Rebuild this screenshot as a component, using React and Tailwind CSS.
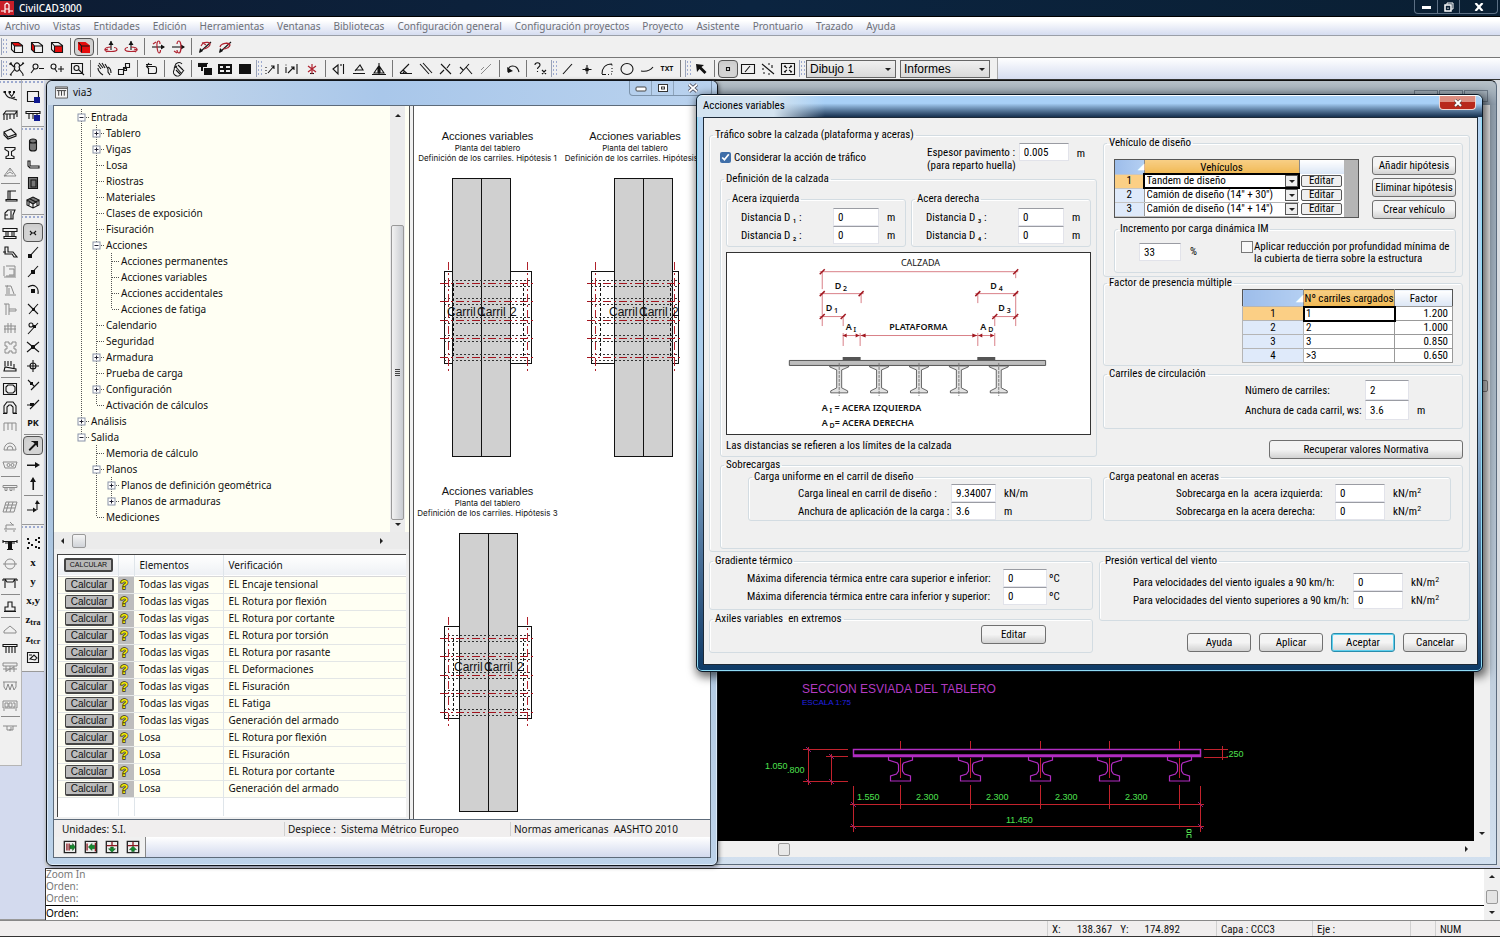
import { useState } from 'react';

const menus = [
  "Archivo", "Vistas", "Entidades", "Edición", "Herramientas", "Ventanas", "Bibliotecas",
  "Configuración general", "Configuración proyectos", "Proyecto", "Asistente", "Prontuario", "Trazado", "Ayuda",
]

// Icon paths on a 16x16 grid. s: stroke, r: red stroke, g: grey stroke, f: fill, rf: red fill, gf: grey fill, b: blue fill
const cube = "M2.500 3.500h7l4 3v7h-8l-3-3zM2.500 3.500l3 3.500h8M5.500 7v6.500"
const orbit = "M8 8c-4 0-6 1-6 2.500s3 2 6 2 6-.5 6-2-2-2-3-2M5 10l-3 1 2 2"
const icons = {
  cubeTop: { rf: "M2.500 3.500h7l4 3.500h-8z", s: cube },
  cubeLeft: { rf: "M2.500 3.500l3 3.500v6.500l-3-3z", s: cube },
  cubeFront: { rf: "M5.500 7h8v6.500h-8z", s: cube },
  cubeAll: { rf: "M2 3h7.500l4.500 3.500v7.500h-8.500l-3.500-3.500z", s: "M2.500 3.500l3 3.500v6.500M5.500 7h8" },
  orbitL: { r: orbit, s: "M8 2v9", f: "M5.500 6L8 2l2.500 4z" },
  orbitR: { r: "M8 8c4 0 6 1 6 2.500s-3 2-6 2-6-.5-6-2 2-2 3-2M11 10l3 1-2 2", s: "M8 2v9", f: "M5.500 6L8 2l2.500 4z" },
  spinL: { r: "M7 8c-.5-4 .5-6 1.500-6S10 4 10 5M7 8c.5 4 1 6 2 6s1.500-2 1.500-3M3 5l3-2", s: "M2 8h12", f: "M11 5.500l4 2.500-4 2.500z" },
  spinR: { r: "M7 5c0-2 1-3 2-3s2 3 2 6-1 6-2 6-2-1-2-3M4 12l3 2", s: "M2 8h12", f: "M11 5.500l4 2.500-4 2.500z" },
  slashL: { r: "M5 4c4-1 8-1 8 1s-3 4-6 5M4 7l2-3 3 2", s: "M3 13L14 3", f: "M2 14l1-5 3 3z" },
  slashR: { r: "M3 8c1-4 9-5 10-2 0 2-4 4-7 4M9 4l4 2-2 3", s: "M3 13L14 3", f: "M2 14l1-5 3 3z" },
  zoomAll: { s: "M6 6a2.500 2.500 0 1 1 4 0 2.500 2.500 0 1 1-4 0M10 8l4 5M1 2l4 4M15 2l-4 3M1 14l5-6M1 2h2M1 2v2M15 2h-2M1 14h2M15 14h-2" },
  zoomOut: { s: "M4 5.500a2.500 2.500 0 1 1 5 0 2.500 2.500 0 1 1-5 0M5 8l-3 4M10 7.500h5" },
  zoomIn: { s: "M2 5.500a2.500 2.500 0 1 1 5 0 2.500 2.500 0 1 1-5 0M6 8l2 3M9 8h6M12 5v6" },
  zoomWin: { s: "M2.500 2.500h11v10h-11zM5 7a2.500 2.500 0 1 1 5 0 2.500 2.500 0 1 1-5 0M10 9l5 5" },
  hand: { s: "M2 4l3 4M3 2l4 5M6 2l3 5M9 3l3 5v3l2 3M2 7c0 2 2 5 5 7M12 6c2 1 3 4 3 6" },
  squares: { s: "M2.500 8.500h5v5h-5zM9.500 2.500h4v4h-4zM7 9l4-3M7.500 8.500v-2h3v3h-3" },
  undoBox: { s: "M3.500 5.500h8a2 2 0 0 1 2 2v3a2 2 0 0 1-2 2h-6v-5M3 3.500h6M6 2L3.500 5.500 6 8" },
  clip: { s: "M12 3a4 4 0 0 0-7 2l-1 4a4 4 0 0 0 7 4l3-4M6 6l5 6M8 4l5 5M6 9l4 4M4 7l3-2" },
  layers: { f: "M1 3h9v3H6v4H4V6H1zM7 7h8v7H7z" , s: "M1 2.500h10" },
  grid4: { f: "M1 3h14v10H1z", w: "M3 5h3v2H3zM9 5h4v2H9zM3 9h4v2H3zM9 9h4v2H9z" },
  solid: { f: "M2 3h12v10H2z" },
  dimA: { s: "M2 6v1M2 9v1M2 12v1M4 12l6-7M7 5h3v3M14 3v10" },
  dimB: { s: "M2 6v6M4 12l6-6M7 6h3v3M13 3v10", g: "M2 3v2" },
  star: { r: "M8 3v10M4 5l8 6M12 5l-8 6", s: "M6 12.500h4" },
  mirror: { s: "M2 8l5-4v9zM12.500 3v10M10 3v2" },
  angle: { s: "M2 12.500h12M4 10l5-6 3 5H4" },
  balance: { s: "M8 2v11M3 12l4-6v6zM13 12L9 6v6zM1 13.500h14" },
  protract: { s: "M2 12.500h12M2 12L11 3M5 9l4 3.500M5 12l2-2" },
  parallel: { s: "M2 3l9 10M5 2l9 10" },
  cross: { s: "M3 3l10 10M12 3l-3 4M6 9l-4 4" },
  tee: { s: "M2 13l9-10M8 6l6 7M2 6l3 3" },
  thin: { g: "M3 13L13 3M6 6l-3 3" },
  undo: { s: "M3 11c0-8 9-8 11 0", f: "M2 6l1 6 5-2z" },
  help: { s: "M3 4c0-3 5-3 5 0 0 2-2.500 2-2.500 4M5.500 10v1M10 9l4 4M14 9l-4 4" },
  line: { s: "M4 13L13 3" },
  point: { s: "M8 4v9M3.500 8.500h9M6.500 7l3 3M9.500 7l-3 3" },
  quarter: { s: "M3 13c0-6 3-10 10-10M3 13.500h4M13 3.500v1M13 7v1M13 10v1M13 13h-1M9 13.500h1" },
  circle: { s: "M2 8a6 5.500 0 1 1 12 0 6 5.500 0 1 1-12 0" },
  curve: { s: "M2 10c6 1 9 0 12-4" },
  pointer: { f: "M3 3l8 1-2.500 2 5 5-2 2-5-5L4 11z" },
  dot: { s: "M6.500 6.500h3v3h-3z" },
  boxLine: { s: "M1.500 3.500h13v9h-13zM5 11l5-6" },
  dashLine: { s: "M2 3l12 10M3 7v2M3 12h2M8 13h2M8 3h2M12 4v3" },
  extents: { s: "M1.500 2.500h13v11h-13zM4 5l3 2M12 5l-3 2M4 11l3-2M12 11l-3-2M4 5h2M12 5h-2M4 11h2M12 11h-2" },
  // bridge rail
  truss: { s: "M1 4h3M6 4h3M11 4h2M3 5c2 4 4 5 6 5M7 5l3 4M12 5l-2 3M6 9c2 1 4 2 7 0M9 10l6 2", f: "M2 3h2v2H2zM7 3h2v2H7zM11 3h2v2h-2z" },
  portal: { s: "M1 8l3-4h11l-2 3H1M2 8v5M5 7v6M8 7v5M12 7v5M15 4v6" },
  slab: { s: "M2 6l7-3 5 5-8 3zM2 6v3l4 4 8-3V8" },
  ibeam: { s: "M3 2.500h10v2l-3.500 2v4l2.500 1v2H4v-2l2.500-1v-4L3 4.500z" },
  aframe: { g: "M8 4L2 12h12zM8 4v3M5 10l3-2 3 2M2 12l3-1" },
  abutA: { s: "M4 12.500h11M8 12V4h6M8 4H6v8M4 12v2h11v-2" },
  abutB: { s: "M3 13V7l3-3h7l-2 5v4zM9 5v8M3 9h3" },
  pier: { s: "M1 3.500h14v3H1zM4 6.500v5M12 6.500v5M2 11.500h12v2H2zM6 6.500v5M10 6.500v5" },
  found: { s: "M3 3h3v5h5l4 5h-3l-2-3H3zM1 8h3" },
  wallA: { g: "M2 3v10M4 3h9v10H4M7 6h5v6H7M2 14h12" },
  wallB: { g: "M3 13h11M5 12V4h4l3 8M7 6v6M3 4h3" },
  wallC: { g: "M2 3h5v11M4 3v11M7 8h7v2H7" },
  frameA: { g: "M2 6h12M3 6v7M6 3v10M9 3v10M13 6v7M2 9h12" },
  puzzle: { g: "M3 3h4v2h3V3h4v4h-2v3h2v4h-4v-2H7v2H3v-4h2V7H3z" },
  load: { s: "M2 13h12v-2L3 9zM3 3v5M6 3v5M9 3v5M12 6v4" },
  boxA: { s: "M1.500 2.500h13v11h-13zM4 6l2-2h5l2 2v4l-2 2H6l-2-2z" },
  archA: { s: "M2 13V6l3-4h6l3 4v7h-3V7L9 5H7L5 7v6zM1 13.500h4M11 13.500h4" },
  comb: { g: "M2 12V4h12v8M6 4v7M10 4v7" },
  archB: { g: "M2 12a6 7 0 0 1 12 0zM5 12a3 4 0 0 1 6 0" },
  box2: { g: "M1 5h14l-2 6H3zM5 8a1.500 1.500 0 1 1 3 0 1.500 1.500 0 1 1-3 0M9 8a1.500 1.500 0 1 1 3 0 1.500 1.500 0 1 1-3 0" },
  deckA: { g: "M1 5.500h14v2H1zM3 7.500v3h2v-3M8 7.500v3h2v-3M12 7.500v3" },
  deckB: { g: "M4 3h11l-3 10H1zM3 6h11M2 9h11M7 3L4 13M11 3L8 13" },
  deckC: { g: "M2 11h12M4 11V7h8M8 4l3 3M3 13h2M11 13h2" },
  ibar: { s: "M1 4.500h14M1 3v3M15 3v3M3 6h10M5 12.500h6", f: "M6 5h4v7H6z" },
  disc: { g: "M3 8a5 5 0 1 1 10 0 5 5 0 1 1-10 0M1 8h14" },
  deckD: { s: "M1 4h14M3 4l2 3h6l2-3M3 4v9M13 4v9M1 4v2M15 4v2" },
  base: { s: "M6 4h4v5h3v4H3V9h3zM2 13.500h12" },
  roof: { g: "M2 10l6-5 6 5v2H2z" },
  deckE: { s: "M1 4.500h14v2H1zM4 7v6M7 7v6M10 7v6M13 7v6" },
  deckF: { g: "M1 4h14v3H1zM4 7v6M8 7v6M12 7v6M1 10h14M4 12l8-4" },
  deckG: { g: "M1 4h14M2 4v5l2 3 2-6 2 6 2-6 2 6 2-3V4" },
  deckH: { g: "M1 4h14v7H1zM3 6h3v4H3zM7 6h3v4H7zM11 6h2v4h-2M1 13h2M13 13h2" },
  deckI: { g: "M1 6h14M5 6v4h6V6M7 10h2v-3" },
  // snap rail
  winA: { s: "M2.500 3.500h11v10h-11z", b: "M9 9h6v6H9z" },
  winB: { s: "M1 4.500h14v2H1zM4 7v5M8 7v5M12 7v4", b: "M9 8h6v6H9z" },
  cyl: { gf: "M4.500 4a3.500 2 0 0 1 7 0v8a3.500 2 0 0 1-7 0z", s: "M4.500 4v8a3.500 2 0 0 0 7 0V4a3.500 2 0 0 0-7 0a3.500 2 0 0 0 7 0" },
  bar: { s: "M3 5v5l2 2h9v-2H5V5z" },
  door: { gf: "M4 2h9v12H4z", s: "M3.500 2.500h9v11h-9zM6 5h5v7H6z" },
  mesh: { gf: "M2 6l6-3 6 3-6 4z", s: "M2 6l6-3 6 3-6 4zM2 6v5l6 3 6-3V6M8 10v4M4 7v5M12 8v4M5 5l6 3" },
  snapX: { s: "M5 6l2 2-2 2M11 6L9 8l2 2M7 8h2" },
  end: { s: "M4 13l9-10", f: "M3 10h4v4H3z" },
  mid: { s: "M3 14L13 3", f: "M6 7h4v4H6z" },
  center: { s: "M3 5c6-4 11 0 10 7", f: "M6 7h4v4H6z" },
  inter: { s: "M3 3l6 6M13 3l-9 10M9 9l4 4", f: "M7 7h3v3H7z" },
  tan: { s: "M4 5a2 2 0 1 1 4 0 2 2 0 1 1-4 0M3 14L13 3", f: "M8 5h3v3H8z" },
  quad: { s: "M2 3l12 10M14 3L2 13", f: "M6 6h4v4H6z" },
  node: { s: "M8 2v12M2 8h12M5 8a3 3 0 1 1 6 0 3 3 0 1 1-6 0" },
  perp: { s: "M3 3l6 6M14 5L6 13", f: "M5 5h3v3H5z" },
  par: { s: "M2 9h6M5 13l9-9", f: "M5 7h4v3H5z" },
  arrowNE: { s: "M4 12l8-8M4.500 12.500l8-8M6.500 3.500H12.500V9", f: "M7 3h6v6z" },
  arrowE: { s: "M2 8h10M2 8.500h10", f: "M10 5l5 3-5 3z" },
  arrowN: { s: "M8 4v10M8.500 4v10", f: "M5 6l3-5 3 5z" },
  arrowEN: { s: "M2 11h8M12 11V4", f: "M8 8.500l4 2.500-4 2.500zM10 5l2-4 3 4z" },
  dots: { f: "M2 3h2v2H2zM3 7h2v2H3zM6 9h2v2H6zM2 12h2v2H2zM10 4h2v2h-2zM13 2h2v2h-2zM13 6h2v2h-2zM10 11h2v2h-2zM13 12h2v2h-2z" },
  note: { s: "M2.500 3.500h11v10h-11zM5 10l4-4 3 3-2 2zM4 6h3" },
}

const Icon = ({ name }) => {
  const i = icons[name]
  return (
    <svg viewBox="0 0 16 16" className="h-4 w-4" aria-hidden="true" fill="none">
      {i.gf && <path d={i.gf} fill="#777" />}
      {i.rf && <path d={i.rf} fill="#e60c0c" />}
      {i.f && <path d={i.f} fill="#111" />}
      {i.w && <path d={i.w} fill="#eee" />}
      {i.g && <path d={i.g} stroke="#8b8b8b" strokeWidth="1" />}
      {i.s && <path d={i.s} stroke="#151515" strokeWidth="1.1" />}
      {i.r && <path d={i.r} stroke="#b02330" strokeWidth="1.2" />}
      {i.b && <path d={i.b} fill="#101a90" />}
    </svg>
  )
}

// "|" is a separator, "::" a grip, "*" marks the pressed button, "#" is a text glyph
const Tool = ({ item, vertical }) => {
  if (item === "|") {
    return vertical
      ? <div className="flex h-1 w-full items-center px-px"><div className="h-px w-full bg-[#8a8a8a]" /></div>
      : <div className="flex h-full w-[7px] justify-center py-[2px]"><div className="w-px bg-[#777]" /></div>
  }
  if (item === "::") {
    return <div className="mt-[2px] mb-[2px] ml-px w-[6px] self-stretch border-l border-[#9aa3b8] bg-[radial-gradient(circle,#9daad0_1px,transparent_1px)] bg-[size:3px_4px]" />
  }
  const on = item[0] === "*"
  const name = on ? item.slice(1) : item
  return (
    <button type="button" aria-label={name} aria-pressed={on}
      className={`flex w-5 shrink-0 items-center justify-center ${vertical ? "h-[19px]" : "h-[18px]"} ${on ? "rounded border border-[#555] bg-[#d4d4d4] shadow-inner" : ""}`}>
      {name[0] === "#"
        ? <span className={name === "#TXT" ? "text-[7px] font-bold" : name === "#PK" ? "text-[9px] font-bold" : "font-['Liberation_Serif',serif] text-[11px] leading-3 font-bold"}>
            {name.slice(1).split("_")[0]}
            {name.includes("_") && <sub className="text-[8px]">{name.split("_")[1]}</sub>}
          </span>
        : <Icon name={name} />}
    </button>
  )
}

const viewTools = ["cubeTop", "cubeLeft", "cubeFront", "|", "*cubeAll", "|", "orbitL", "orbitR", "|", "spinL", "spinR", "|", "slashL", "slashR"]
const drawTools = [
  "zoomAll", "zoomOut", "zoomIn", "zoomWin", "|", "hand", "squares", "|", "undoBox", "|", "clip", "|", "layers", "grid4", "solid",
  "::", "dimA", "dimB", "star", "|", "mirror", "angle", "balance", "|", "protract", "parallel", "cross", "tee", "thin", "|", "undo", "|", "help",
  "::", "line", "point", "quarter", "circle", "curve", "#TXT", "|", "::", "pointer", "|", "*dot", "boxLine", "dashLine", "extents", "::",
]
const bridgeRail = [
  "truss", "portal", "slab", "ibeam", "aframe", "|", "abutA", "abutB", "pier", "found", "wallA", "wallB", "wallC", "frameA", "puzzle", "load", "|",
  "boxA", "archA", "comb", "archB", "box2", "|", "deckA", "deckB", "deckC", "ibar", "disc", "deckD", "|", "base", "|",
  "roof", "deckE", "deckF", "deckG", "deckH", "|", "deckI",
]
const snapRails = [
  { pad: "pt-[6px] pb-[2px]", items: ["winA", "winB"] },
  { pad: "pt-2 pb-[3px]", items: ["cyl", "bar", "door", "mesh"] },
  { pad: "pt-2 pb-2", items: ["*snapX", "end", "mid", "center", "inter", "tan", "quad", "node", "perp", "par", "#PK", "|", "*arrowNE", "arrowE", "arrowN", "|", "arrowEN"] },
  { pad: "pt-2 pb-[5px]", items: ["dots", "#x", "#y", "#x,y", "#z_tra", "#z_tcr", "note"] },
]

const tree = [
  { t: "Entrada", open: true, kids: [
    { t: "Tablero", kids: [] }, { t: "Vigas", kids: [] }, { t: "Losa" }, { t: "Riostras" }, { t: "Materiales" },
    { t: "Clases de exposición" }, { t: "Fisuración" },
    { t: "Acciones", open: true, kids: [
      { t: "Acciones permanentes" }, { t: "Acciones variables" }, { t: "Acciones accidentales" }, { t: "Acciones de fatiga" },
    ] },
    { t: "Calendario" }, { t: "Seguridad" }, { t: "Armadura", kids: [] }, { t: "Prueba de carga" },
    { t: "Configuración", kids: [] }, { t: "Activación de cálculos" },
  ] },
  { t: "Análisis", kids: [] },
  { t: "Salida", open: true, kids: [
    { t: "Memoria de cálculo" },
    { t: "Planos", open: true, kids: [{ t: "Planos de definición geométrica", kids: [] }, { t: "Planos de armaduras", kids: [] }] },
    { t: "Mediciones" },
  ] },
]

const checks = [
  ["Todas las vigas", "EL Encaje tensional"],
  ["Todas las vigas", "EL Rotura por flexión"],
  ["Todas las vigas", "EL Rotura por cortante"],
  ["Todas las vigas", "EL Rotura por torsión"],
  ["Todas las vigas", "EL Rotura por rasante"],
  ["Todas las vigas", "EL Deformaciones"],
  ["Todas las vigas", "EL Fisuración"],
  ["Todas las vigas", "EL Fatiga"],
  ["Todas las vigas", "Generación del armado"],
  ["Losa", "EL Rotura por flexión"],
  ["Losa", "EL Fisuración"],
  ["Losa", "EL Rotura por cortante"],
  ["Losa", "Generación del armado"],
]

const Arrow = ({ dir }) => {
  const d = { up: "M1 5l3-3 3 3z", down: "M1 3l3 3 3-3z", left: "M5 1L2 4l3 3z", right: "M3 1l3 3-3 3z" }[dir]
  return <svg viewBox="0 0 8 8" className="h-2 w-2 shrink-0" aria-hidden="true"><path d={d} fill="#222" /></svg>
}

const TreeCell = ({ line, half, branch, box }) => (
  <svg viewBox="0 0 15 16" className="h-4 w-[15px] shrink-0" aria-hidden="true" fill="none">
    {line && <path d={half ? "M5.500 0v8" : "M5.500 0v16"} stroke="#555" strokeDasharray="1 1" />}
    {branch && <path d="M6 8.500h8" stroke="#555" strokeDasharray="1 1" />}
    {box && <rect x="2" y="5" width="7" height="7" fill="#fff" stroke="#8a93a8" />}
    {box && <path d={box === "+" ? "M3.500 8.500h4M5.500 6.500v4" : "M3.500 8.500h4"} stroke="#223" />}
  </svg>
)

const TreeRows = ({ nodes, guides = [] }) => nodes.map((n, i) => {
  const last = i === nodes.length - 1
  return (
    <li key={n.t}>
      <div className="flex h-4 items-center whitespace-nowrap">
        {guides.map((g, k) => <TreeCell key={k} line={g} />)}
        <TreeCell line half={last} branch box={n.kids && (n.open ? "-" : "+")} />
        <span>{n.t}</span>
      </div>
      {n.open && <ul><TreeRows nodes={n.kids} guides={[...guides, !last]} /></ul>}
    </li>
  )
})

// One plan view: deck outline, beam axes and the two lanes drawn on top
const Plan = ({ cx, top, deckX, laneX, n }) => {
  const axes = [12, 30, 49, 67, 86]
  const y = top + 145
  return (
    <g fontFamily="Liberation Sans, Arial, sans-serif" textAnchor="middle">
      <text x={cx} y={top + 14} fontSize="11">Acciones variables</text>
      <g fontSize="8" fontFamily="Inter, sans-serif">
        <text x={cx} y={top + 25}>Planta del tablero</text>
        <text x={cx} y={top + 35}>Definición de los carriles. Hipótesis {n}</text>
      </g>
      <rect x={deckX + .5} y={y + .5} width="87" height="92" fill="#fdfdfd" stroke="#111" />
      <rect x={laneX + .5} y={y - 92.5} width="58" height="278" fill="#d0d0d0" stroke="#111" />
      <path d={`M${laneX + 29.5} ${y - 93}v278`} stroke="#111" />
      <path d={`M${deckX + 9.5} ${y + 12}v75M${deckX + 79.5} ${y + 12}v75`} stroke="#111" strokeDasharray="3 2" />
      {axes.map((a) => (
        <g key={a} fill="none">
          <path d={`M${deckX} ${y + a - 2.5}h88M${deckX} ${y + a + 3.5}h88`} stroke="#333" strokeDasharray="2 2" />
          <path d={`M${deckX - 4} ${y + a + .5}h94`} stroke="#a3131d" strokeDasharray="8 3 2 3" />
        </g>
      ))}
      <path d={`M${deckX + 4.5} ${y - 9}v110M${deckX + 83.5} ${y - 9}v110`} stroke="#b0212b" strokeDasharray="8 3 2 3" />
      <text x={laneX - 5} y={y + 45} fontSize="12" textAnchor="start">Carril 1</text>
      <text x={laneX + 25} y={y + 45} fontSize="12" textAnchor="start">Carril</text>
      <text x={laneX + 58} y={y + 45} fontSize="12" textAnchor="start">2</text>
    </g>
  )
}

const CadDrawing = () => {
  const beams = [900.5, 970.5, 1040.5, 1109.5, 1179.5]
  return (
    <svg viewBox="717 105 757 700" preserveAspectRatio="xMinYMin meet" className="h-full w-full overflow-visible" fill="none" role="img" aria-label="Sección del tablero">
      <g fontFamily="Liberation Sans, Arial, sans-serif">
        <text x="802" y="693" fontSize="12" fill="#b43cc4">SECCION ESVIADA DEL TABLERO</text>
        <text x="802" y="705" fontSize="8" fill="#2222e0">ESCALA 1:75</text>
        <g fontSize="9" fill="#4fe04f">
          <text x="765" y="769">1.050</text>
          <text x="787" y="773">.800</text>
          <text x="857" y="800">1.550</text>
          <text x="916" y="800">2.300</text>
          <text x="986" y="800">2.300</text>
          <text x="1055" y="800">2.300</text>
          <text x="1125" y="800">2.300</text>
          <text x="1006" y="823">11.450</text>
          <text x="1226" y="757">.250</text>
        </g>
      </g>
      <path d="M1187 829.500h4v3h-4zM1187 838v-3.500h4V838" stroke="#4fe04f" />
      <path d="M803 749.500h45M803 781.500h45M808.500 747v38M826 756.500h22M831.500 754v31M850 804.500h354M850 826.500h354M853.500 786v46M1200.500 786v46M1204 749.500h24M1204 757.500h24M1222.500 746v14" stroke="#c2222c" />
      <path d="M806 747l5 5M806 779l5 5M829 754l5 5M829 779l5 5M851 802l5 5M851 824l5 5M1198 802l5 5M1198 824l5 5" stroke="#8c1c80" />
      <path d="M853.500 749.500h347v7h-347zM853.500 755h347" stroke="#b02cc0" strokeWidth="1.5" />
      {beams.map((x) => (
        <g key={x}>
          <path d={`M${x} 741v8M${x} 758v20M${x} 785v24`} stroke="#c2222c" />
          <path d={`M${x - 12} 757v3l9 3 1 2v6l-2 3-6 2v5h20v-5l-6-2-2-3v-6l1-2 9-3v-3`} stroke="#b02cc0" strokeWidth="1.2" />
        </g>
      ))}
    </svg>
  )
}

const RoadSection = () => {
  const beams = [839, 879, 919, 959, 999]
  const ticks = [[822, 271], [1016, 271], [822, 293], [861, 293], [978, 293], [1016, 293], [822, 316], [843, 316], [995, 316], [1016, 316]]
  return (
    <svg viewBox="727 253 364 181" className="block h-[181px] w-full" fill="none" role="img" aria-label="Definición de la calzada">
      <path d="M820 271.500h199M820 293.500h44M976 293.500h43M820 316.500h25M993 316.500h26M843 335.500h152M822.500 272v17M822.500 294v32M861.500 294v9M978.500 294v9M1016.500 272v6M1016.500 294v32M843.500 317v9M995.500 317v9M843.500 333v13M860.500 333v13M978.500 333v13M995.500 333v13" stroke="#d98088" />
      {ticks.map(([x, y]) => <path key={`${x}-${y}`} d={`M${x - 2} ${y + 3}l5-5`} stroke="#a01820" strokeWidth="1.5" />)}
      <path d="M843 335.500l4-2v4zM860 335.500l-4-2v4zM861 335.500l5-2v4zM978 335.500l-5-2v4zM979 335.500l4-2v4zM995 335.500l-4-2v4z" fill="#a01820" />
      <path d="M843 357h18v3h-18zM978 357h18v3h-18z" fill="#555" />
      <path d="M789.500 360.500h257v5h-257z" fill="#bdbdbd" stroke="#555" />
      {beams.map((x) => (
        <g key={x}>
          <path d={`M${x - 9} 366h19v1l-7 3v18l6 3v2h-17v-2l6-3v-18l-7-3z`} fill="#e2e2e2" stroke="#444" strokeWidth=".8" />
          <path d={`M${x + .5} 363v33`} stroke="#777" strokeDasharray="3 1" />
        </g>
      ))}
      <g fontFamily="Noto Sans, sans-serif" fontSize="9" fill="#111">
        <text x="921" y="266" textAnchor="middle">CALZADA</text>
        <g fontWeight="600">
          <text x="919" y="330" textAnchor="middle">PLATAFORMA</text>
          <text x="835" y="289">D<tspan fontSize="7" dy="2"> 2</tspan></text>
          <text x="826" y="311">D<tspan fontSize="7" dy="2"> 1</tspan></text>
          <text x="991" y="289">D<tspan fontSize="7" dy="2"> 4</tspan></text>
          <text x="999" y="311">D<tspan fontSize="7" dy="2"> 3</tspan></text>
          <text x="846" y="330">A<tspan fontSize="7" dy="2"> I</tspan></text>
          <text x="981" y="330">A<tspan fontSize="7" dy="2"> D</tspan></text>
          <text x="822" y="411">A<tspan fontSize="7" dy="2"> I</tspan><tspan dy="-2"> = ACERA IZQUIERDA</tspan></text>
          <text x="822" y="426">A<tspan fontSize="7" dy="2"> D</tspan><tspan dy="-2">= ACERA DERECHA</tspan></text>
        </g>
      </g>
    </svg>
  )
}

const Group = ({ title, className = "", body = "", children }) => (
  <fieldset className={`min-w-0 rounded-[3px] border border-[#d3dce2] shadow-[inset_1px_1px_0_#fff] ${className}`}>
    <legend className="ml-[3px] px-[2px] leading-3 whitespace-pre">{title}</legend>
    <div className={body}>{children}</div>
  </fieldset>
)

const Field = ({ id, label, value, unit, cols, h = "h-[18px]" }) => {
  const [v, setV] = useState(value)
  return (
    <div className={`grid items-center ${cols}`}>
      <label htmlFor={id} className="whitespace-pre">{label}</label>
      <input id={id} value={v} onChange={(e) => setV(e.target.value)}
        className={`w-full border border-[#e2e3ea] border-t-[#9a9ca3] bg-white px-1 ${h}`} />
      <span className="pl-2">{unit}</span>
    </div>
  )
}

const Push = ({ children, className = "", primary }) => (
  <button type="button"
    className={`h-[19px] rounded-[3px] border bg-linear-to-b from-[#f4f4f4] from-50% to-[#d2d2d2] text-center whitespace-nowrap ${primary ? "border-[#2a8dad] shadow-[inset_0_0_0_1px_#5fd0ee]" : "border-[#707070]"} ${className}`}>
    {children}
  </button>
)

const kNm2 = <>kN/m<sup className="text-[8px]">2</sup></>

const vehicles = ["Tandem de diseño", 'Camión de diseño (14" + 30")', 'Camión de diseño (14" + 14")']
const factors = [["1", "1.200"], ["2", "1.000"], ["3", "0.850"], [">3", "0.650"]]
const corner = "bg-linear-to-r from-[#9dbdea] to-[#b4cff2]"

const VehicleTable = () => (
  <div className="flex w-[245px] border border-[#555] bg-[#b5b5b5]">
    <table className="w-[229px] table-fixed border-collapse bg-white">
      <colgroup><col className="w-[29px]" /><col /><col className="w-[45px]" /></colgroup>
      <thead>
        <tr className="h-[14px] leading-[13px]">
          <th className={`border-r border-[#8a8a8a] text-right text-[8px] text-white ${corner}`}>◢</th>
          <th className="border-r border-[#8a8a8a] bg-linear-to-b from-[#f8cf85] to-[#f0b851] font-normal">Vehículos</th>
          <th className="bg-linear-to-b from-white to-[#dbe6f5]" />
        </tr>
      </thead>
      <tbody>
        {vehicles.map((v, i) => (
          <tr key={v} className="h-[14px] leading-3">
            <th className={`border border-t-[#c5c5c5] border-r-[#999] border-b-[#c5c5c5] border-l-0 p-0 font-normal ${i === 0 ? "bg-[#fbcf85]" : "bg-[#dfeafa]"}`}>{i + 1}</th>
            <td className={`p-0 ${i === 0 ? "outline-2 -outline-offset-1 outline-black" : "border-b border-[#b5b5b5]"}`}>
              <div className="relative flex items-center">
                <select aria-label={`Vehículo ${i + 1}`} defaultValue={v} className="h-[13px] w-full appearance-none bg-transparent pl-[2px] leading-3">
                  {vehicles.map((o) => <option key={o}>{o}</option>)}
                </select>
                <span className="pointer-events-none absolute right-px flex h-[12px] w-[13px] items-center justify-center border border-[#555] bg-[#eee]"><Arrow dir="down" /></span>
              </div>
            </td>
            <td className="p-0 text-center">
              <button type="button" className="h-[12px] w-[41px] rounded-[2px] border border-[#555] bg-[#efefef] leading-[10px]">Editar</button>
            </td>
          </tr>
        ))}
      </tbody>
    </table>
  </div>
)

const FactorTable = () => (
  <table className="w-[211px] table-fixed border-collapse border border-[#555] bg-white">
    <colgroup><col className="w-[61px]" /><col className="w-[91px]" /><col /></colgroup>
    <thead>
      <tr className="h-[17px]">
        <th className={`border-r border-[#8a8a8a] p-0 text-right text-[9px] text-white ${corner}`}>◢</th>
        <th className="border-r border-[#8a8a8a] bg-linear-to-b from-[#f8cf85] to-[#f0b851] p-0 font-normal whitespace-nowrap">Nº carriles cargados</th>
        <th className="bg-linear-to-b from-white to-[#dbe6f5] p-0 font-normal">Factor</th>
      </tr>
    </thead>
    <tbody>
      {factors.map(([a, b], i) => (
        <tr key={a} className="h-[14px] leading-3">
          <th className={`border border-[#b5b5b5] p-0 font-normal ${i === 0 ? "bg-[#fbcf85]" : "bg-[#dfeafa]"}`}>{i + 1}</th>
          <td className={`border border-[#999] p-0 pl-[2px] ${i === 0 ? "outline-2 -outline-offset-1 outline-black" : ""}`}>{a}</td>
          <td className="border border-[#999] p-0 pr-1 text-right">{b}</td>
        </tr>
      ))}
    </tbody>
  </table>
)

const VariableActions = () => {
  const [traffic, setTraffic] = useState(true)
  return (
    <section aria-label="Acciones variables"
      className="absolute top-[14px] left-[651px] flex w-[787px] flex-col rounded-[6px] border border-[#0c1a28] bg-linear-to-b from-[#b7d5f3] via-[#a9cbea] to-[#0e3a66] pr-1 pb-[6px] pl-[6px] font-['Roboto_Condensed','Roboto',sans-serif] text-[11px] leading-[13px] text-black shadow-[2px_3px_10px_2px_rgba(0,0,0,.6),inset_0_0_0_1px_#8fdcf5]">
      <header className="-mr-1 -ml-[6px] flex h-[22px] items-start justify-between rounded-t-[6px] border-t border-white bg-linear-to-b from-[#a8d0f6] from-35% to-[#17314f]">
        <h2 className="h-[21px] rounded-tl-[6px] bg-linear-to-r from-[#d3e3f0] from-60% to-transparent pr-10 pl-[6px] leading-[20px]">Acciones variables</h2>
        <button type="button" aria-label="Cerrar" className="mr-[6px] flex h-[14px] w-[37px] items-center justify-center rounded-b-[4px] border border-t-0 border-[#efd5d0] bg-linear-to-b from-[#dc8d80] from-45% to-[#b8281c] to-50%">
          <svg viewBox="0 0 10 8" className="h-2 w-[10px]"><path d="M2 1l6 6M8 1L2 7" stroke="#444" strokeWidth="3" /><path d="M2 1l6 6M8 1L2 7" stroke="#fff" strokeWidth="2" /></svg>
        </button>
      </header>
      <div className="border border-[#1d2a38] bg-[#f0f0f0] pt-[11px] pr-[7px] pb-[11px] pl-[5px]">
        <Group title="Tráfico sobre la calzada (plataforma y aceras)" className="pb-[2px]">
          <div className="flex gap-[6px] px-[10px] pr-[6px]">
            <div className="w-[377px]">
              <div className="flex h-8 items-start justify-between pt-[2px] pr-3">
                <label className="mt-2 flex items-center gap-[3px]">
                  <input type="checkbox" checked={traffic} onChange={(e) => setTraffic(e.target.checked)} className="h-[11px] w-[11px] accent-[#3f6ea8]" />
                  Considerar la acción de tráfico
                </label>
                <div className="flex gap-[3px]">
                  <label htmlFor="pavimento" className="pt-[3px]">Espesor pavimento :<br />(para reparto huella)</label>
                  <input id="pavimento" defaultValue="0.005" className="h-[18px] w-[50px] border border-[#e2e3ea] border-t-[#9a9ca3] bg-white px-1" />
                  <span className="pt-1 pl-[5px]">m</span>
                </div>
              </div>
              <Group title="Definición de la calzada" body="px-[5px] pb-1">
                <div className="flex gap-[5px] pt-2">
                  {[["Acera izquierda", "₁", "₂"], ["Acera derecha", "₃", "₄"]].map(([t, a, b]) => (
                    <Group key={t} title={t} className="flex-1" body="px-[14px] pt-[3px] pb-[2px]">
                      {[a, b].map((k) => (
                        <Field key={k} id={`d${k}`} label={`Distancia D ${k} :`} value="0" unit="m" cols="grid-cols-[92px_46px_auto]" />
                      ))}
                    </Group>
                  ))}
                </div>
                <div className="mt-[5px] border border-[#333] bg-white"><RoadSection /></div>
                <p className="mt-1">Las distancias se refieren a los límites de la calzada</p>
              </Group>
            </div>
            <div className="-mt-1 min-w-0 flex-1">
              <Group title="Vehículo de diseño" body="px-[6px] pb-[3px]">
                <div className="flex justify-between pt-[7px] pl-1">
                  <div className="pt-[3px]"><VehicleTable /></div>
                  <div className="flex w-[84px] flex-col gap-[3px]">
                    <Push>Añadir hipótesis</Push>
                    <Push>Eliminar hipótesis</Push>
                    <Push>Crear vehículo</Push>
                  </div>
                </div>
                <Group title="Incremento por carga dinámica IM" className="mt-1 ml-1" body="pb-[7px]">
                  <div className="flex items-start pt-[6px] pl-6">
                    <input aria-label="Incremento" defaultValue="33" className="mt-[2px] h-[18px] w-[42px] border border-[#e2e3ea] border-t-[#9a9ca3] bg-white px-1" />
                    <span className="pt-1 pl-[9px]">%</span>
                    <label className="ml-11 flex items-start gap-px leading-3">
                      <input type="checkbox" className="h-[12px] w-[12px] shrink-0 appearance-none border border-[#777] bg-[#f8f8f8] checked:bg-[#3f6ea8]" />
                      <span className="whitespace-nowrap">Aplicar reducción por profundidad mínima de<br />la cubierta de tierra sobre la estructura</span>
                    </label>
                  </div>
                </Group>
              </Group>
              <Group title="Factor de presencia múltiple" body="pr-[9px] pb-[2px]">
                <div className="flex justify-end"><FactorTable /></div>
              </Group>
              <Group title="Carriles de circulación" className="mt-[2px]" body="pb-2 pl-[141px]">
                <Field id="carriles" label="Número de carriles:" value="2" unit="" cols="grid-cols-[120px_44px_auto]" h="h-[20px]" />
                <Field id="ancho" label="Anchura de cada carril, ws:" value="3.6" unit="m" cols="grid-cols-[120px_44px_auto]" h="h-[20px]" />
              </Group>
              <div className="flex justify-end pt-[11px]"><Push className="w-[194px]">Recuperar valores Normativa</Push></div>
            </div>
          </div>
          <Group title="Sobrecargas" className="mx-[10px] mr-[6px]" body="pb-[27px]">
            <div className="flex gap-[11px] pr-[11px] pl-[27px]">
              <Group title="Carga uniforme en el carril de diseño" className="w-[344px]" body="pl-[49px] pt-px">
                <Field id="lineal" label="Carga lineal en carril de diseño :" value="9.34007" unit="kN/m" cols="grid-cols-[153px_45px_auto]" />
                <Field id="aplicacion" label="Anchura de aplicación de la carga :" value="3.6" unit="m" cols="grid-cols-[153px_45px_auto]" />
              </Group>
              <Group title="Carga peatonal en aceras" className="flex-1" body="pl-[72px] pt-px">
                <Field id="izq" label="Sobrecarga en la  acera izquierda:" value="0" unit={kNm2} cols="grid-cols-[159px_50px_auto]" />
                <Field id="der" label="Sobrecarga en la acera derecha:" value="0" unit={kNm2} cols="grid-cols-[159px_50px_auto]" />
              </Group>
            </div>
          </Group>
        </Group>
        <div className="mt-[3px] flex gap-[6px]">
          <div className="w-[384px]">
            <Group title="Gradiente térmico" body="pt-[2px] pb-1 pl-[37px]">
              <Field id="supinf" label="Máxima diferencia térmica entre cara superior e inferior:" value="0" unit={<span className="-ml-[6px]">ºC</span>} cols="grid-cols-[256px_44px_auto]" />
              <Field id="infsup" label="Máxima diferencia térmica entre cara inferior y superior:" value="0" unit={<span className="-ml-[6px]">ºC</span>} cols="grid-cols-[256px_44px_auto]" />
            </Group>
            <Group title="Axiles variables  en extremos" className="mt-[3px]" body="pr-[46px] pb-2">
              <div className="flex justify-end"><Push className="w-[65px]">Editar</Push></div>
            </Group>
          </div>
          <div className="flex-1">
            <Group title="Presión vertical del viento" body="pt-[6px] pb-[11px] pl-[33px]">
              <Field id="v1" label="Para velocidades del viento iguales a 90 km/h:" value="0" unit={kNm2} cols="grid-cols-[220px_50px_auto]" />
              <Field id="v2" label="Para velocidades del viento superiores a 90 km/h:" value="0" unit={kNm2} cols="grid-cols-[220px_50px_auto]" />
            </Group>
            <div className="flex justify-end gap-2 pt-3 pr-[3px]">
              <Push className="w-16">Ayuda</Push>
              <Push className="w-16">Aplicar</Push>
              <Push className="w-16" primary>Aceptar</Push>
              <Push className="w-16">Cancelar</Push>
            </div>
          </div>
        </div>
      </div>
    </section>
  )
}

const docks = [
  { line: "M4.500 4v8M7 4v8", arrow: "M8 6h3V4l3 4-3 4v-2H8z" },
  { line: "M3.500 4v8M13 3v10", arrow: "M12 6H9V4L5 8l4 4v-2h3z" },
  { line: "M2 6.500h12M8 2v5", arrow: "M6.500 8h3v2H12l-4 4-4-4h2.500z" },
  { line: "M2 6.500h12M8 2v5", arrow: "M6.500 13h3v-2H12L8 7l-4 4h2.500z" },
]

const ProjectWindow = () => (
  <section aria-label="via3" className="absolute inset-y-0 left-px flex w-[672px] flex-col rounded-[6px] border border-[#10151c] bg-linear-to-b from-[#b7cbe2] via-[#a9c3de] to-[#bdd3ea] px-[6px] pb-[7px] shadow-[inset_0_0_0_1px_#dceaf7,1px_1px_4px_rgba(0,0,0,.5)]">
    <header className="-mx-[6px] flex h-6 items-start justify-between rounded-t-[6px] bg-linear-to-r from-[#cddbe9] via-[#a9c7ea] to-[#b9d2ee] pl-2">
      <h2 className="flex items-center gap-[5px] pt-1">
        <svg viewBox="0 0 14 14" className="h-[14px] w-[13px]" fill="none"><path d="M.5 1.500h13v12H.5z" fill="#f3f3f3" stroke="#555" /><path d="M2 5.500h10M4 6v5M7 6v5M10 6v5M1 3h12" stroke="#333" /></svg>
        via3
      </h2>
      <div className="mr-[5px] flex h-[15px] overflow-hidden rounded-b-[4px] border border-t-0 border-[#7c93ab]">
        <button type="button" aria-label="Minimizar" className="flex w-[22px] items-center justify-center border-r border-[#8ea4bb]"><svg viewBox="0 0 12 8" className="h-2 w-3"><rect x="1" y="3" width="10" height="4" rx="1" fill="#fff" stroke="#444" /></svg></button>
        <button type="button" aria-label="Maximizar" className="flex w-[22px] items-center justify-center border-r border-[#8ea4bb]"><svg viewBox="0 0 12 10" className="h-[10px] w-3"><rect x="1.500" y="1.500" width="9" height="7" fill="#fff" stroke="#333" /><rect x="4.500" y="4" width="3" height="2" stroke="#333" fill="none" /></svg></button>
        <button type="button" aria-label="Cerrar" className="flex w-[37px] items-center justify-center"><svg viewBox="0 0 12 10" className="h-[10px] w-3"><path d="M2 1.500l8 7M10 1.500l-8 7" stroke="#445" strokeWidth="3.500" /><path d="M2 1.500l8 7M10 1.500l-8 7" stroke="#fff" strokeWidth="1.800" /></svg></button>
      </div>
    </header>
    <div className="flex min-h-0 flex-1 border border-[#5d6b7a] bg-[#f0f0f0]">
      <div className="flex w-[356px] flex-col border-r border-[#555]">
        <div className="flex h-[426px] bg-[#fffff3]">
          <ul className="min-w-0 flex-1 overflow-hidden pt-[3px] pl-[22px]">
            <TreeRows nodes={tree} />
          </ul>
          <div className="mr-1 flex w-[15px] flex-col items-center bg-[#ececec] pt-[6px] pb-1">
            <Arrow dir="up" />
            <div className="mt-[105px] flex h-[300px] w-[13px] items-center justify-center rounded-[2px] border border-[#999] bg-linear-to-r from-[#f2f2f2] to-[#c9ccd1]">
              <svg viewBox="0 0 7 9" className="h-[9px] w-[7px]" aria-hidden="true"><path d="M1 1.500h5M1 3.500h5M1 5.500h5M1 7.500h5" stroke="#444" /></svg>
            </div>
            <div className="mt-auto"><Arrow dir="down" /></div>
          </div>
        </div>
        <div className="flex h-[17px] items-center bg-[#ebebeb] pr-6 pl-[5px]">
          <Arrow dir="left" />
          <div className="ml-[5px] h-[14px] w-[14px] rounded-[2px] border border-[#999] bg-linear-to-b from-[#f5f5f5] to-[#d0d3d8]" />
          <div className="ml-auto"><Arrow dir="right" /></div>
        </div>
        <div className="mt-[5px] mr-[3px] mb-[2px] ml-[3px] flex-1 overflow-hidden border-t border-l border-[#444] bg-white">
          <table className="w-full table-fixed border-collapse">
            <colgroup><col className="w-[60px]" /><col className="w-[16px]" /><col className="w-[89px]" /><col /></colgroup>
            <thead>
              <tr className="h-[21px] border-b border-[#d8d8d8] bg-linear-to-b from-white to-[#eef1f5]">
                <th className="p-0 pl-[6px] text-left"><button type="button" className="block h-[14px] w-[49px] rounded-[2px] border-2 border-[#444] bg-[#b9b9b9] font-['Liberation_Sans',sans-serif] text-[7px] leading-[10px] font-normal">CALCULAR</button></th>
                <th className="border-x border-[#dfe5ea]" />
                <th className="border-r border-[#dfe5ea] p-0 pl-[5px] text-left font-normal">Elementos</th>
                <th className="p-0 pl-[5px] text-left font-normal">Verificación</th>
              </tr>
            </thead>
            <tbody>
              {checks.map(([el, ver], i) => (
                <tr key={i} className="h-[17px] border-b border-[#e3e6e6] bg-[#fffff3] leading-[15px]">
                  <td className="p-0 pl-[7px]"><button type="button" className="block h-[14px] w-[49px] rounded-[2px] border border-r-2 border-b-2 border-[#444] bg-[#bcbcbc] font-['Liberation_Sans',sans-serif] text-[10px] leading-[11px]">Calcular</button></td>
                  <td className="bg-[#bdbdbd] p-0">
                    <button type="button" aria-label={`Ayuda de ${ver}`} className="block">
                      <svg viewBox="0 0 15 16" className="h-[15px] w-[15px]"><text x="2" y="13" fontSize="14" fontWeight="700" fontFamily="Liberation Sans, sans-serif" fill="#f5ea0c" stroke="#33300a" strokeWidth="1.500" paintOrder="stroke">?</text></svg>
                    </button>
                  </td>
                  <td className="border-r border-[#dfe5ea] p-0 pl-[5px]">{el}</td>
                  <td className="p-0 pl-[5px]">{ver}</td>
                </tr>
              ))}
              <tr className="h-[19px]"><td /><td className="border-x border-[#dfe5ea]" /><td className="border-r border-[#dfe5ea]" /><td /></tr>
            </tbody>
          </table>
        </div>
      </div>
      <div className="ml-[3px] min-w-0 flex-1 border-l border-[#555] bg-white">
        <svg viewBox="414 106 296 700" preserveAspectRatio="xMinYMin meet" className="h-full w-full" fill="none" role="img" aria-label="Planta del tablero">
          <g fill="#111">
            <Plan cx={487.5} top={126} deckX={444} laneX={452} n={1} />
            <Plan cx={635} top={126} deckX={591} laneX={614} n={2} />
            <Plan cx={487.5} top={481} deckX={444} laneX={459} n={3} />
          </g>
        </svg>
      </div>
    </div>
    <footer className="border border-t-0 border-[#5d6b7a]">
      <div className="flex h-[17px] items-center bg-[#f0eeee]">
        <span className="w-[230px] pl-2">Unidades: S.I.</span>
        <span className="w-[226px] border-l border-[#d0d0d0] pl-[3px] whitespace-pre">Despiece :  Sistema Métrico Europeo</span>
        <span className="border-l border-[#d0d0d0] pl-[3px] whitespace-pre">Normas americanas  AASHTO 2010</span>
      </div>
      <div className="flex h-5 items-center bg-linear-to-b from-white to-[#d3daee]">
        <div className="flex h-full items-center gap-[7px] border-r border-[#888] bg-[#f0f0f0] pr-[5px] pl-[9px]">
          {docks.map((d, i) => (
            <button key={i} type="button" aria-label={`Acoplar ${i + 1}`}>
              <svg viewBox="0 0 16 16" className="h-[14px] w-[14px]" fill="none"><path d="M1.500 1.500h13v13h-13z" fill="#eee" stroke="#222" strokeWidth="1.500" /><path d={d.line} stroke="#8c1820" strokeWidth="1.500" /><path d={d.arrow} fill="#128a2c" stroke="#0b4a18" strokeWidth=".6" /></svg>
            </button>
          ))}
        </div>
      </div>
    </footer>
  </section>
)

const DrawingWindow = () => (
  <section aria-label="Dibujo 1" className="absolute inset-y-0 right-[3px] left-[664px] mb-px flex flex-col rounded-t-[6px] border border-t-[#111] border-[#5b6b7d] bg-linear-to-b from-[#8f9dab] via-[#aebdcb] to-[#d2e0ef] pr-[6px] pb-[7px] pl-[7px]">
    <header className="-mr-[6px] -ml-[7px] flex h-6 items-start justify-end gap-px rounded-t-[6px] bg-linear-to-b from-[#b7c1c8] to-[#8d9cab] pr-2 pt-[9px]">
      {["Minimizar", "Maximizar", "Cerrar"].map((b) => <button key={b} type="button" aria-label={b} className="h-3 w-6 border border-[#6b7886]" />)}
    </header>
    <div className="flex min-h-0 flex-1">
      <div className="min-w-0 flex-1 overflow-hidden bg-black"><CadDrawing /></div>
      <div className="flex w-4 flex-col items-center bg-[#f0f0f0] pb-1">
        <div className="mt-[275px] h-3 w-3 rounded-[2px] border border-[#888] bg-[#ddd]" />
        <div className="mt-auto"><Arrow dir="down" /></div>
      </div>
    </div>
    <div className="flex h-4 items-center bg-[#f0f0f0] pr-5 pl-[61px]">
      <div className="h-[13px] w-3 rounded-[2px] border border-[#999] bg-[#e8e8e8]" />
      <div className="ml-auto"><Arrow dir="right" /></div>
    </div>
  </section>
)

const Combo = ({ value, label }) => (
  <div className="relative flex h-[18px] w-[90px] items-center border border-[#666] bg-linear-to-b from-[#f0f0f0] to-[#d9d9d9]">
    <select aria-label={label} defaultValue={value} className="h-full w-full appearance-none bg-transparent pl-[3px] font-['Liberation_Sans',sans-serif] text-[12px] leading-4 text-black">
      <option>{value}</option>
    </select>
    <span className="pointer-events-none absolute right-[3px]"><Arrow dir="down" /></span>
  </div>
)

const railDots = "bg-[radial-gradient(circle,#9daad0_1px,transparent_1px)] bg-[size:4px_4px] bg-repeat-x bg-[position:2px_0px]"

export default function App() {
  return (
    <div className="flex h-screen flex-col overflow-hidden bg-[#d3daee] font-['Noto_Sans','Segoe_UI',sans-serif] text-[10px] leading-[14px] text-[#111]">
      <header className="flex h-[17px] shrink-0 items-center justify-between border-b border-black bg-linear-to-r from-[#0d1c33] via-[#0b2440] to-[#0a1f33] text-white">
        <h1 className="flex items-center gap-[5px] text-[10px] font-medium">
          <svg viewBox="0 0 14 14" className="h-[14px] w-[14px]" fill="none"><path d="M0 0h14v14H0z" fill="#c81e28" /><path d="M5 12V3.500L7 2l2 1.500V12M1 10h4M9 10h4M5 8h4" stroke="#fff" strokeWidth="1.200" /></svg>
          CivilCAD3000
        </h1>
        <div className="mr-[2px] flex h-[14px] self-start rounded-b-[4px] border border-t-0 border-[#5c6f84]">
          <button type="button" aria-label="Minimizar" className="flex w-[23px] items-end justify-center border-r border-[#5c6f84] pb-1"><span className="h-[3px] w-[9px] bg-white" /></button>
          <button type="button" aria-label="Restaurar" className="flex w-[22px] items-center justify-center border-r border-[#5c6f84]"><svg viewBox="0 0 10 10" className="h-[10px] w-[10px]" fill="none"><path d="M3 2.500V1h6v6H7.500" stroke="#fff" /><rect x="1" y="3" width="6" height="6" stroke="#fff" strokeWidth="1.500" /><path d="M4 5.500v1.500" stroke="#fff" /></svg></button>
          <button type="button" aria-label="Cerrar" className="flex w-[37px] items-center justify-center"><svg viewBox="0 0 10 8" className="h-2 w-[10px]"><path d="M1.500 0l7 8M8.500 0l-7 8" stroke="#fff" strokeWidth="2.200" /></svg></button>
        </div>
      </header>
      <nav className="flex h-[19px] shrink-0 items-center gap-[13px] border-b border-[#9a9fa8] bg-linear-to-b from-white from-20% to-[#d5dcf0] pl-[5px] text-[#6d7078]">
        {menus.map((m) => <a key={m} href="#" className="whitespace-nowrap">{m}</a>)}
      </nav>
      <div className="flex h-[22px] shrink-0 items-center border-b border-[#777] bg-[#f0f0f0]">
        <Tool item="::" />
        {viewTools.map((t, i) => <Tool key={i} item={t} />)}
      </div>
      <div className="flex h-[22px] shrink-0 items-center border-b border-[#333] bg-linear-to-b from-white to-[#d5dcf0]">
        <div className="flex h-full items-center border-r border-[#aaa] bg-[#f0f0f0] pr-[7px]">
          <Tool item="::" />
          {drawTools.map((t, i) => <Tool key={i} item={t} />)}
          <div className="flex gap-1 pl-px">
            <Combo value="Dibujo 1" label="Dibujo" />
            <Combo value="Informes" label="Informes" />
          </div>
        </div>
      </div>
      <main className="flex min-h-0 flex-1">
        <aside className="flex w-[45px] shrink-0 items-start border-b border-[#999]">
          <div className={`w-[22px] border-r border-[#b5b5b5] border-b bg-[#f0f0f0] pt-[6px] pb-7 ${railDots}`}>
            {bridgeRail.map((t, i) => <Tool key={i} item={t} vertical />)}
          </div>
          <div className="w-[22px]">
            {snapRails.map((r, n) => (
              <div key={n} className={`border-b border-[#9a9a9a] bg-[#f0f0f0] pl-px ${r.pad} ${railDots}`}>
                {r.items.map((t, i) => <Tool key={i} item={t} vertical />)}
              </div>
            ))}
          </div>
        </aside>
        <div className="flex min-w-0 flex-1 flex-col">
          <div className="relative min-h-0 flex-1 bg-[#d9dde2]">
            <DrawingWindow />
            <ProjectWindow />
            <VariableActions />
          </div>
          <div className="mt-[2px] flex h-[52px] border-t border-l border-[#333] bg-white text-[#777]">
            <div className="min-w-0 flex-1">
              <div className="flex h-[36px] flex-col justify-end overflow-hidden pb-px leading-3">
                <p>Zoom In</p>
                <p>Orden:</p>
                <p>Orden:</p>
              </div>
              <label className="flex border-t border-black leading-[14px] text-black">
                Orden:<input className="flex-1 outline-none" />
              </label>
            </div>
            <div className="flex w-4 flex-col items-center bg-[#f0f0f0] py-1">
              <Arrow dir="up" />
              <div className="mt-[9px] h-[14px] w-3 rounded-[2px] border border-[#999] bg-[#e4e4e4]" />
              <div className="mt-auto"><Arrow dir="down" /></div>
            </div>
          </div>
        </div>
      </main>
      <footer className="flex h-[17px] shrink-0 justify-end border-t border-b border-t-[#888] border-b-[#333] bg-[#f0eeee] font-['Roboto_Condensed','Roboto',sans-serif] text-[11px] leading-[18px]">
        <span className="w-[169px] border-l border-[#d0d0d0] pl-1 whitespace-pre">X:<span className="inline-block w-4" />138.367<span className="inline-block w-2" />Y:<span className="inline-block w-4" />174.892</span>
        <span className="w-24 border-l border-[#d0d0d0] pl-1">Capa : CCC3</span>
        <span className="w-[98px] border-l border-[#d0d0d0] pl-1">Eje :</span>
        <span className="w-[25px] border-l border-[#d0d0d0]" />
        <span className="w-[65px] border-l border-[#d0d0d0] pl-1">NUM</span>
      </footer>
    </div>
  )
}
